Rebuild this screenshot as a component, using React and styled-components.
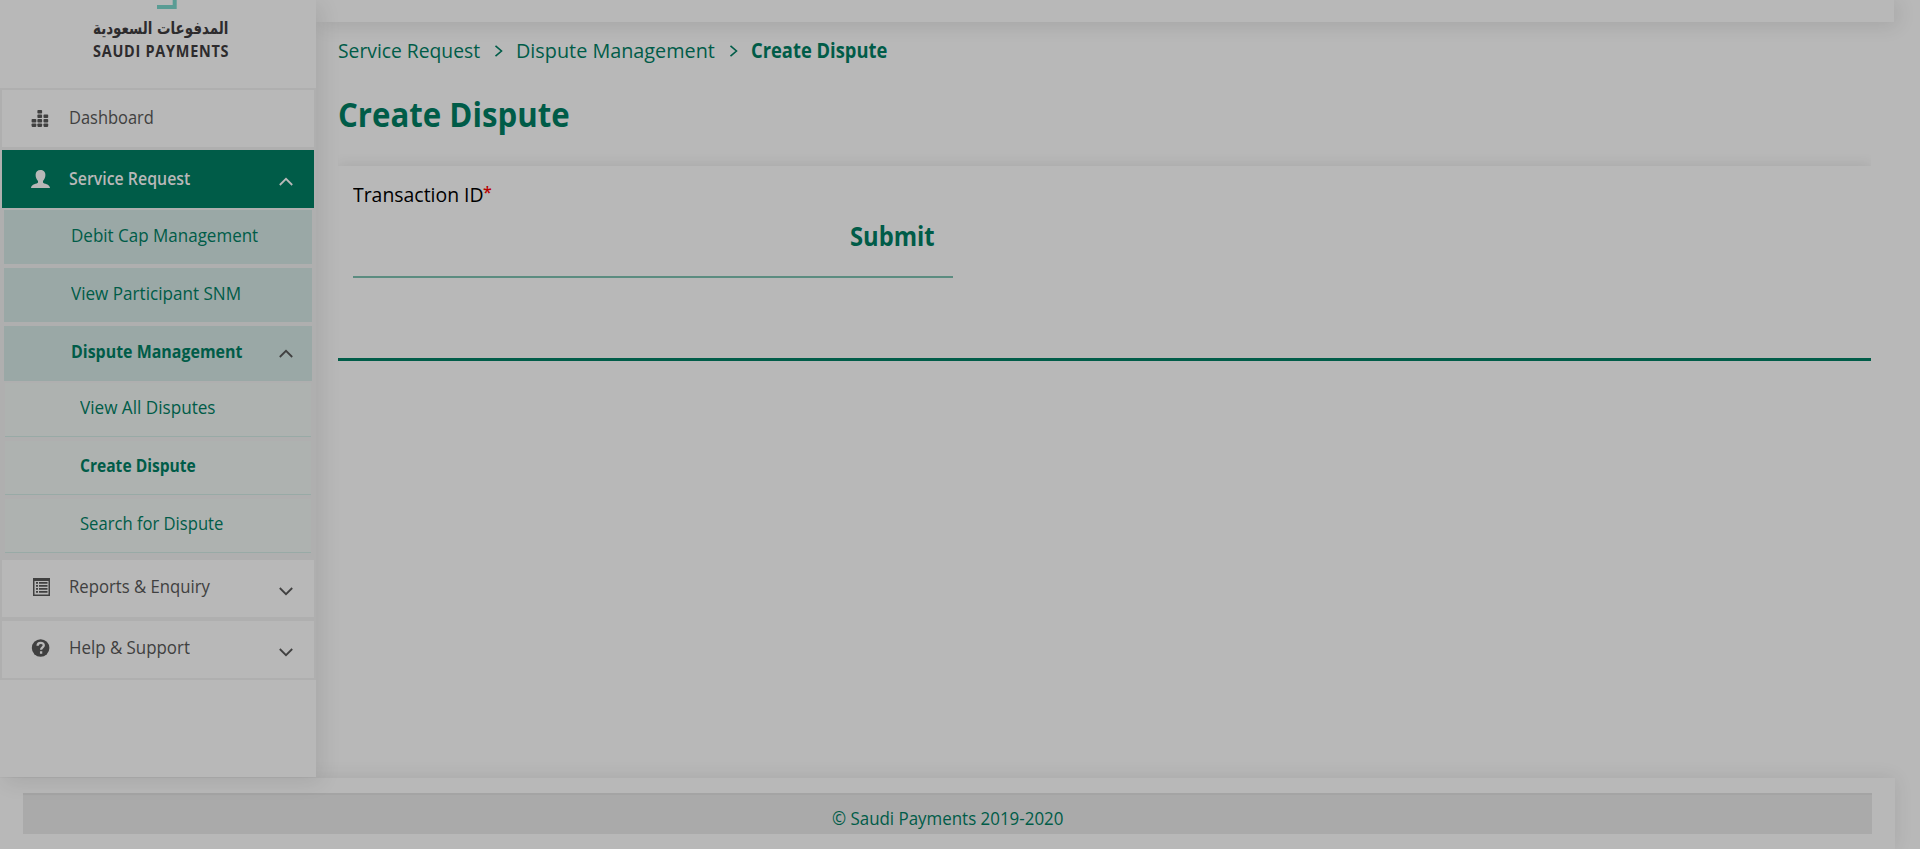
import React, { useLayoutEffect, useRef, useState } from "react";
import styled, { createGlobalStyle, css } from "styled-components";

const Global = createGlobalStyle`
  * { box-sizing: border-box; }
  body {
    margin: 0;
    background: #b8b8b8;
    font-family: "Open Sans", "Noto Sans", sans-serif;
    color: #404040;
    overflow: hidden;
  }
`;

const green = "#005c48";

const Page = styled.div`
  height: 849px;
  display: flex;
  flex-direction: column;
`;
const Body = styled.div`
  height: 778px;
  display: flex;
`;
const Sidebar = styled.aside`
  width: 316px;
  height: 777px;
  flex: none;
  position: relative;
  z-index: 2;
  background: #b8b8b8;
  box-shadow: 5px 5px 20px rgba(0, 0, 0, 0.09);
`;
const LogoArea = styled.div`
  height: 88px;
  padding-left: 93px;
  color: #2d2b2d;
  & > svg { display: block; }
`;
const LogoArabic = styled.div`
  height: 23px;
  line-height: 24px;
  margin-top: 6px;
  font-family: "DejaVu Sans", sans-serif;
  font-weight: 700;
  font-size: 17px;
`;
const LogoLatin = styled.div`
  height: 24px;
  line-height: 24px;
  font-family: "Open Sans", sans-serif;
  font-weight: 700;
  font-size: 15.5px;
  letter-spacing: 0.8px;
`;
const Menu = styled.nav`
  background: #afafaf;
  height: 592px;
  padding: 2px;
  display: flex;
  flex-direction: column;
`;
const FitBox = styled.span`
  display: inline-block;
  white-space: nowrap;
  transform-origin: 0 50%;
`;
const Item = styled.a`
  height: ${(p) => (p.$active ? 58 : 57)}px;
  margin-bottom: ${(p) => p.$gap}px;
  flex: none;
  display: flex;
  align-items: center;
  padding: 0 21px ${(p) => p.$lift ?? 4}px 28px;
  font-size: 18px;
  background: #b8b8b8;
  color: #404040;
  ${(p) => p.$active && css`
    background: ${green};
    color: #b8b8b8;
    font-weight: 600;
  `}
  & > svg:last-child { margin: ${(p) => (p.$active ? 7 : 11)}px 0 0 auto; }
`;
const IconBox = styled.span`
  width: 38.5px;
  display: flex;
  align-items: center;
  padding: ${(p) => p.$top ?? 3}px 0 0 ${(p) => p.$left || 0}px;
`;
const SubItem = styled.a`
  height: ${(p) => p.$h || 54}px;
  margin: 0 2px ${(p) => p.$gap}px;
  flex: none;
  display: flex;
  align-items: center;
  padding: 0 19px ${(p) => (p.$bold ? 5 : 4)}px 66.5px;
  font-size: 18px;
  color: ${green};
  background: #9aa8a6;
  font-weight: ${(p) => (p.$bold ? 700 : 400)};
  & > svg { margin: 5px 0 0 auto; }
`;
const Leaf = styled.a`
  height: 54px;
  margin: 0 3px ${(p) => p.$gap}px;
  flex: none;
  display: flex;
  align-items: center;
  padding: 0 0 5px 74.5px;
  font-size: 18px;
  color: ${green};
  background: #aeb2b0;
  border-bottom: 1px solid #98aaa6;
  font-weight: ${(p) => (p.$bold ? 700 : 400)};
`;
const Main = styled.main`
  flex: 1;
  display: flex;
  flex-direction: column;
`;
const TopBar = styled.header`
  height: 22px;
  width: 1578px;
  background: #b8b8b8;
  box-shadow: 3px 3px 20px rgba(0, 0, 0, 0.11);
`;
const Crumbs = styled.div`
  height: 58px;
  padding: 0 0 2px 22px;
  display: flex;
  align-items: center;
  color: ${green};
  font-size: 20.5px;
`;
const Crumb = styled.span`
  width: ${(p) => p.$w}px;
  font-weight: ${(p) => (p.$bold ? 700 : 400)};
`;
const CrumbArrow = styled.span`
  width: ${(p) => p.$w}px;
  display: flex;
  padding-top: 2px;
`;
const Title = styled.h1`
  margin: 0;
  height: 86px;
  padding: 8px 0 0 21.5px;
  line-height: 52px;
  font-size: 34px;
  font-weight: 700;
  color: ${green};
`;
const CardClip = styled.div`
  width: 1533px;
  height: 207px;
  margin: -12px 0 0 22px;
  padding-top: 12px;
  overflow: hidden;
`;
const Card = styled.section`
  height: 195px;
  background: #b8b8b8;
  border-bottom: 3px solid ${green};
  box-shadow: 0 0 14px rgba(0, 0, 0, 0.1);
  padding: 15px;
`;
const Field = styled.div`
  width: 600px;
  height: 97px;
  border-bottom: 2px solid #5b8c80;
`;
const FieldLabel = styled.label`
  display: flex;
  height: 28px;
  line-height: 27px;
  font-size: 20px;
  color: #000;
`;
const LabelText = styled.span`
  width: 130px;
`;
const Star = styled.span`
  color: #b80000;
  font-weight: 600;
  font-size: 16px;
  line-height: 22px;
`;
const Submit = styled.button`
  display: block;
  width: 103px;
  margin: 7px 0 0 auto;
  padding: 0;
  border: 0;
  background: none;
  font: inherit;
  font-size: 26px;
  font-weight: 700;
  line-height: 40px;
  text-align: left;
  color: ${green};
`;
const Footer = styled.footer`
  height: 71px;
  width: 1895px;
  padding: 15px 23px;
  background: #b8b8b8;
  box-shadow: 0 0 18px rgba(0, 0, 0, 0.09);
`;
const Copyright = styled.div`
  height: 41px;
  border-top: 2px solid #a4a4a4;
  background: #aaaaaa;
  padding-left: 809px;
  color: ${green};
  font-size: 17.5px;
  line-height: 47px;
`;

/* Condenses its text horizontally so that it spans exactly `w` pixels. */
function Fit({ w, children, ...rest }) {
  const ref = useRef(null);
  const [scale, setScale] = useState(1);
  useLayoutEffect(() => {
    setScale(w / ref.current.offsetWidth);
  }, [w]);
  return (
    <FitBox ref={ref} style={{ transform: `scaleX(${scale})` }} {...rest}>
      {children}
    </FitBox>
  );
}

const Chevron = ({ up, color = "#404040" }) => (
  <svg width="14" height="9" viewBox="0 0 14 9" fill="none" stroke={color} strokeWidth="1.8">
    <path d={up ? "M.8 8 7 1.8 13.2 8" : "M.8 1 7 7.2 13.2 1"} />
  </svg>
);
const Arrow = () => (
  <svg width="9" height="12" viewBox="0 0 9 12" fill="none" stroke={green} strokeWidth="1.6">
    <path d="M1.500 .8 7.500 6 1.500 11.2" />
  </svg>
);
const LogoMark = () => (
  <svg width="138" height="10" viewBox="0 0 138 10">
    <path d="M64 7h17.700V0" fill="none" stroke="#5a9c94" strokeWidth="4" />
  </svg>
);
const BarsIcon = () => (
  <svg width="18" height="17" viewBox="0 0 18 17" fill="#404040">
    {[[0.6, 9], [0.6, 13.4], [6.4, 0], [6.4, 4.6], [6.4, 9], [6.4, 13.4], [12.5, 4.6], [12.5, 9], [12.5, 13.4]].map(([x, y]) => (
      <rect key={`${x}-${y}`} x={x} y={y} width="4.7" height="3.500" rx="0.8" />
    ))}
  </svg>
);
const UserIcon = () => (
  <svg width="19" height="18" viewBox="0 0 19 18" fill="#b8b8b8">
    <path d="M9.500 0C6.700 0 4.600 1.800 4.600 4.800c0 2.600 1 4.900 2.400 6.200v1.400C6.500 14 0 13.700 0 18h19c0-4.300-6.500-4-7-5.600V11c1.400-1.300 2.400-3.600 2.400-6.200C14.400 1.800 12.300 0 9.500 0z" />
  </svg>
);
const ListIcon = () => (
  <svg width="20" height="18" viewBox="0 0 20 18" fill="#404040">
    <path fillRule="evenodd" d="M3 0h17v18H3zM4.500 3v13.500h14V3z" />
    <path d="M6 4h2v1.800H6zM9 4h8.500v1.800H9zM6 7h2v1.800H6zM9 7h8.500v1.800H9zM6 10h2v1.800H6zM9 10h8.500v1.800H9zM6 13h2v1.800H6zM9 13h8.500v1.800H9z" />
  </svg>
);
const HelpIcon = () => (
  <svg width="20" height="18" viewBox="0 0 20 18">
    <circle cx="10.600" cy="9" r="8.800" fill="#404040" />
    <path d="M7.600 6.700c0-3.800 6.200-3.800 6.200-.4 0 2-2.700 2.100-2.700 4.500M11.100 12.300v2.400" fill="none" stroke="#b8b8b8" strokeWidth="2.300" />
  </svg>
);

export default function App() {
  return (
    <>
      <Global />
      <Page>
        <Body>
          <Sidebar>
            <LogoArea>
              <LogoMark />
              <LogoArabic><Fit w={135} lang="ar" dir="rtl">المدفوعات السعودية</Fit></LogoArabic>
              <LogoLatin><Fit w={136}>SAUDI PAYMENTS</Fit></LogoLatin>
            </LogoArea>
            <Menu>
              <Item $gap={3}><IconBox $left={1}><BarsIcon /></IconBox><Fit w={85}>Dashboard</Fit></Item>
              <Item $gap={2} $active $lift={2}><IconBox $left={1} $top={2}><UserIcon /></IconBox><Fit w={121}>Service Request</Fit><Chevron up color="#b8b8b8" /></Item>
              <SubItem $gap={4}><Fit w={187}>Debit Cap Management</Fit></SubItem>
              <SubItem $gap={4}><Fit w={170}>View Participant SNM</Fit></SubItem>
              <SubItem $gap={2} $h={55} $bold><Fit w={171}>Dispute Management</Fit><Chevron up /></SubItem>
              <Leaf $gap={4}><Fit w={136}>View All Disputes</Fit></Leaf>
              <Leaf $gap={4} $bold><Fit w={116}>Create Dispute</Fit></Leaf>
              <Leaf $gap={7}><Fit w={143}>Search for Dispute</Fit></Leaf>
              <Item $gap={4} $lift={6}><IconBox><ListIcon /></IconBox><Fit w={141}>Reports &amp; Enquiry</Fit><Chevron /></Item>
              <Item $gap={0} $lift={6}><IconBox><HelpIcon /></IconBox><Fit w={121}>Help &amp; Support</Fit><Chevron /></Item>
            </Menu>
          </Sidebar>
          <Main>
            <TopBar />
            <Crumbs>
              <Crumb $w={156}><Fit w={142}>Service Request</Fit></Crumb>
              <CrumbArrow $w={22}><Arrow /></CrumbArrow>
              <Crumb $w={213}><Fit w={199}>Dispute Management</Fit></Crumb>
              <CrumbArrow $w={22}><Arrow /></CrumbArrow>
              <Crumb $bold><Fit w={136}>Create Dispute</Fit></Crumb>
            </Crumbs>
            <Title><Fit w={232}>Create Dispute</Fit></Title>
            <CardClip>
              <Card>
                <Field>
                  <FieldLabel><LabelText><Fit w={131}>Transaction ID</Fit></LabelText><Star>*</Star></FieldLabel>
                  <Submit><Fit w={85}>Submit</Fit></Submit>
                </Field>
              </Card>
            </CardClip>
          </Main>
        </Body>
        <Footer><Copyright><Fit w={231}>© Saudi Payments 2019-2020</Fit></Copyright></Footer>
      </Page>
    </>
  );
}
